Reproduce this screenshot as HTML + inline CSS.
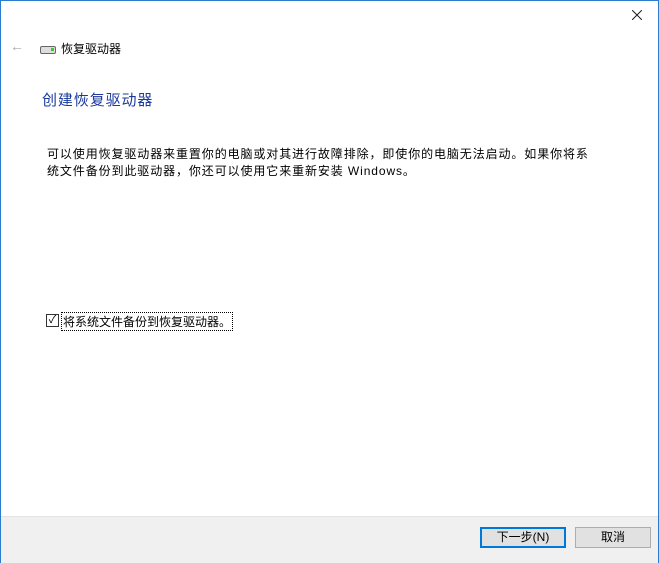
<!DOCTYPE html>
<html><head><meta charset="utf-8"><style>
body{margin:0;width:659px;height:563px;background:#fff;position:relative;overflow:hidden;font-family:"Liberation Sans","Noto Sans CJK SC",sans-serif;font-size:12px;color:#000}
.frame{position:absolute;left:0;top:0;width:657px;height:561px;border:1px solid #2b7bd0;box-sizing:content-box}
.a{position:absolute;white-space:nowrap}
.foot{position:absolute;left:1px;top:516px;width:657px;height:46px;background:#f0f0f0;border-top:1px solid #e3e3e3}
.btn{position:absolute;top:527px;height:21px;background:#e1e1e1;border:1px solid #adadad;box-sizing:border-box;text-align:center;line-height:19px}
</style></head><body>
<div class="frame"></div>
<svg class="a" style="left:632px;top:10px" width="10" height="10"><path d="M0 0L10 10M10 0L0 10" stroke="#222" stroke-width="1"/></svg>
<div class="a" style="left:10px;top:38px;font-size:14px;color:#aaa">←</div>
<div class="a" style="left:40px;top:46px;width:14px;height:6px;border:1px solid #666;border-radius:2px;background:#ddd"></div>
<div class="a" style="left:51px;top:48px;width:3px;height:3px;background:#3c3"></div>
<div class="a" style="left:61px;top:40px">恢复驱动器</div>
<div class="a" style="left:42px;top:89px;font-size:15px;color:#1a3a9c;letter-spacing:0.9px">创建恢复驱动器</div>
<div class="a" style="left:47px;top:145px;letter-spacing:0.9px">可以使用恢复驱动器来重置你的电脑或对其进行故障排除，即使你的电脑无法启动。如果你将系</div>
<div class="a" style="left:47px;top:162px;letter-spacing:0.9px">统文件备份到此驱动器，你还可以使用它来重新安装 Windows。</div>
<div class="a" style="left:46px;top:314px;width:11px;height:11px;border:1px solid #333;font-size:11px;line-height:11px;text-align:center">✓</div>
<div class="a" style="left:61px;top:312px;border:1px dotted #000;padding:0 1px">将系统文件备份到恢复驱动器。</div>
<div class="foot"></div>
<div class="btn" style="left:480px;width:86px;border:2px solid #0078d7;line-height:17px">下一步(N)</div>
<div class="btn" style="left:575px;width:76px">取消</div>
</body></html>
